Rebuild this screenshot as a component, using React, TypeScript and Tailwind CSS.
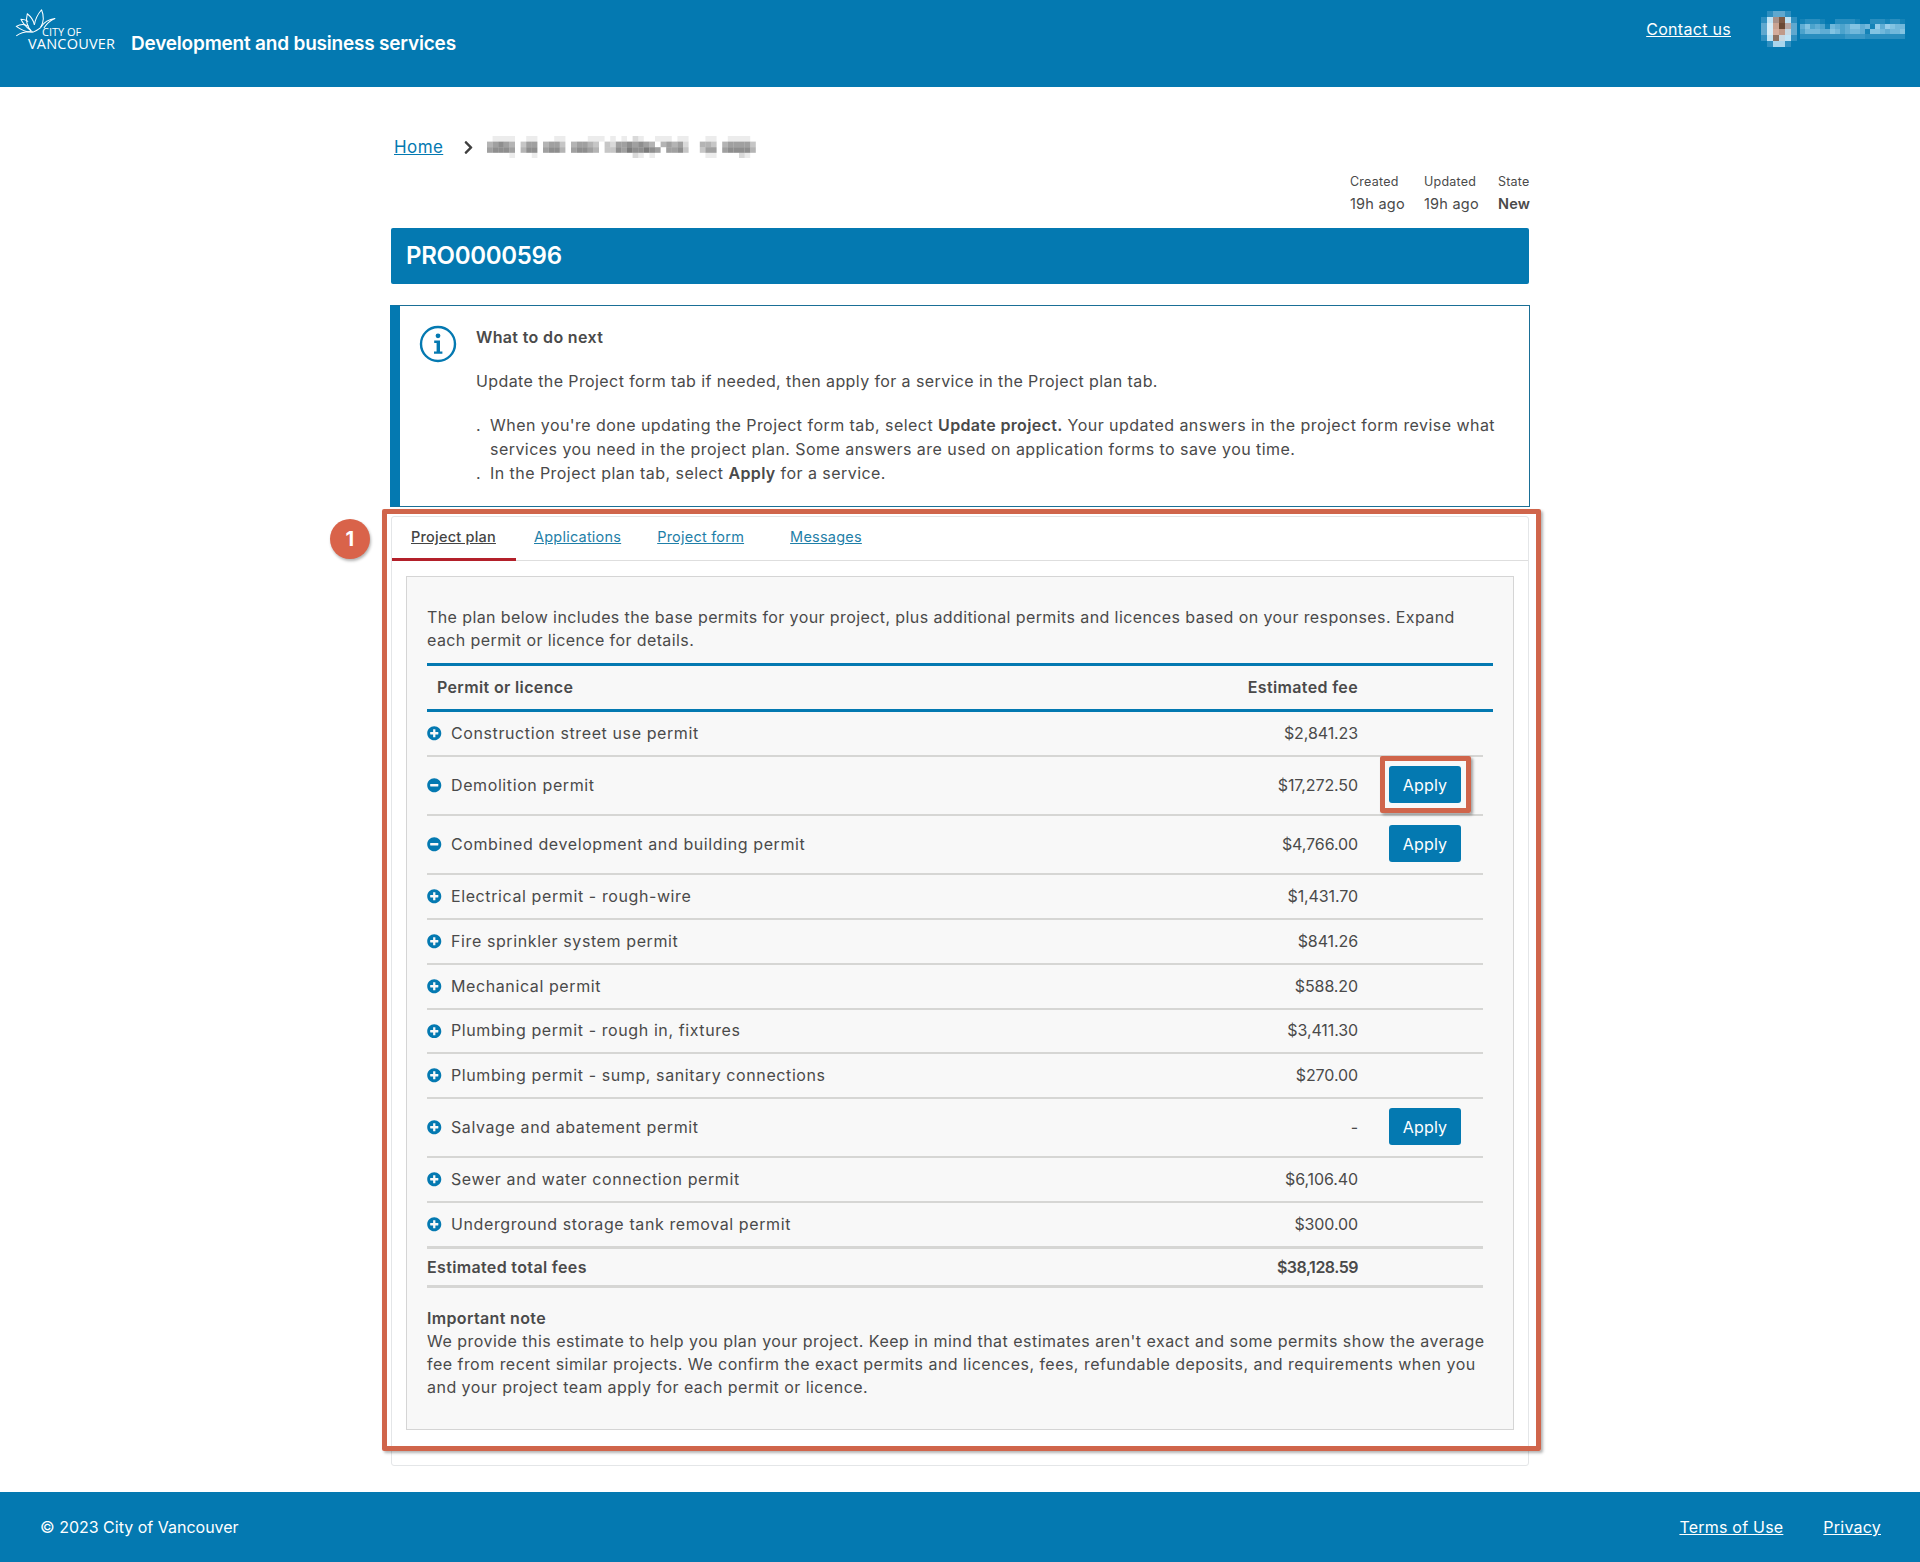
import { FaChevronRight, FaMinusCircle, FaPlusCircle } from 'react-icons/fa';

const crumbCells = [
  '011110011000110000111010102100111011000110011110',
  '456540355045530455430325565654045452004430455553',
  '566650466056640566540336576676505563003550566664',
  '000010001000000000000000002101000000000110000210',
];

const nameCells = [
  '122210022221002221221',
  '574541654577561858766',
  '466655764566517765667',
  '222222222333322222222',
];

const avatarCells = [
  ['#0479b1', '#2f8fc0', '#5fa8cf', '#5fa8cf', '#2f8fc0', '#0479b1'],
  ['#2f8fc0', '#bfe3f5', '#a89088', '#7d5a45', '#bfe3f5', '#2f8fc0'],
  ['#5fa8cf', '#d5ecf8', '#c9a392', '#6b4a35', '#b9a9a6', '#5fa8cf'],
  ['#5fa8cf', '#d5ecf8', '#d4ac9c', '#c09a88', '#c6d8e2', '#5fa8cf'],
  ['#2f8fc0', '#bfe3f5', '#8d7263', '#c6d8e2', '#bfe3f5', '#2f8fc0'],
  ['#0479b1', '#2f8fc0', '#a9d5ec', '#a9d5ec', '#2f8fc0', '#0479b1'],
];

const rows = [
  { name: 'Construction street use permit', fee: '$2,841.23', h: 'h-[45px]' },
  { name: 'Demolition permit', fee: '$17,272.50', h: 'h-[59px]', open: true, apply: true, marked: true },
  { name: 'Combined development and building permit', fee: '$4,766.00', h: 'h-[59px]', open: true, apply: true },
  { name: 'Electrical permit - rough-wire', fee: '$1,431.70', h: 'h-[45px]' },
  { name: 'Fire sprinkler system permit', fee: '$841.26', h: 'h-[45px]' },
  { name: 'Mechanical permit', fee: '$588.20', h: 'h-[45px]' },
  { name: 'Plumbing permit - rough in, fixtures', fee: '$3,411.30', h: 'h-[44px]' },
  { name: 'Plumbing permit - sump, sanitary connections', fee: '$270.00', h: 'h-[45px]' },
  { name: 'Salvage and abatement permit', fee: '-', h: 'h-[59px]', apply: true },
  { name: 'Sewer and water connection permit', fee: '$6,106.40', h: 'h-[45px]' },
  { name: 'Underground storage tank removal permit', fee: '$300.00', h: 'h-[45px]' },
];

// pixelated stand-in for the censored text in the screenshot
function Mosaic({ cells, size, color, className }: { cells: string[]; size: number; color: string; className?: string }) {
  return (
    <svg className={className} width={cells[0].length * size} height={cells.length * size} aria-hidden="true">
      {cells.map((row, y) =>
        row.split('').map((v, x) => (
          <rect key={`${x}-${y}`} x={x * size} y={y * size} width={size} height={size} fill={color} opacity={Number(v) / 9} />
        )),
      )}
    </svg>
  );
}

function Avatar() {
  return (
    <svg width="36" height="36" aria-hidden="true">
      {avatarCells.map((row, y) =>
        row.map((c, x) => <rect key={`${x}-${y}`} x={x * 6} y={y * 6} width="6" height="6" fill={c} />),
      )}
    </svg>
  );
}

function Logo() {
  return (
    <div className="relative w-[104px] h-[50px] shrink-0">
      <svg className="absolute left-0 top-[5px] w-[42px] h-[30px]" viewBox="0 0 52 38" fill="none" stroke="white" strokeWidth="1.3" strokeLinejoin="round">
        <path d="M20 28 C14 22 13 14 15 6 C20 10 23 15 24 20" />
        <path d="M24 20 C25 13 28 7 33 1 C36 8 36 16 32 23" />
        <path d="M32 23 C36 17 41 13 50 12 C45 14 40 18 36 24" />
        <path d="M20 28 C15 24 10 20 7 13 C11 13 14 14 16 16" />
        <path d="M22 29 C15 30 8 27 1 22 C6 19 12 19 17 22" />
        <path d="M1 34 C6 30 14 28 23 29 C27 27 31 25 32 23" />
      </svg>
      <div className="absolute left-[27px] top-[22px] text-[11px] leading-none tracking-normal text-white font-['Open_Sans',sans-serif]">CITY OF</div>
      <div className="absolute left-[13px] top-[33px] text-[14.5px] leading-none tracking-[0.2px] text-white font-['Open_Sans',sans-serif]">VANCOUVER</div>
    </div>
  );
}

function InfoIcon() {
  return (
    <svg className="w-[38px] h-[38px] shrink-0" viewBox="0 0 38 38" fill="none" aria-hidden="true">
      <circle cx="19" cy="19" r="17" stroke="#0479b1" strokeWidth="2.4" />
      <circle cx="19" cy="10.8" r="2.4" fill="#0479b1" />
      <path d="M15.2 15.6h5.8v10.8h2.4v2.4h-8.4v-2.4h2.6v-8.4h-2.4z" fill="#0479b1" />
    </svg>
  );
}

function Row({ name, fee, h, open, apply, marked }: { name: string; fee: string; h: string; open?: boolean; apply?: boolean; marked?: boolean }) {
  return (
    <div className={`flex items-center w-[1056px] pb-[2px] border-b-2 border-[#d6d6d4] tracking-[0.6px] ${h}`}>
      <span className="w-[24px] mt-[2px] shrink-0 text-[#0479b1] text-[14.5px]">{open ? <FaMinusCircle /> : <FaPlusCircle />}</span>
      <span className="flex-1">{name}</span>
      <span className="w-[120px] text-right tracking-[-0.1px]">{fee}</span>
      <span className="w-[125px] pl-[31px]">
        {apply && (
          <span className="relative inline-block align-middle">
            <button className="block w-[72px] h-[37px] rounded-[3px] bg-[#0479b1] text-white text-[16px] tracking-[0.22px]">Apply</button>
            {marked && (
              <span className="absolute -left-[9px] -top-[10px] w-[91px] h-[57px] border-[5px] border-[#d0654b] rounded-[2px] shadow-[2px_2px_3px_rgba(0,0,0,0.35)]" />
            )}
          </span>
        )}
      </span>
    </div>
  );
}

export default function App() {
  return (
    <div className="min-h-[1562px] flex flex-col bg-white text-[#4a4a4a] text-[16px] leading-[24px] font-['Inter',sans-serif] tracking-[0.4px]">
      <header className="h-[87px] bg-[#0479b1] text-white flex items-start pl-[15px] pr-[15px]">
        <div className="pt-[4px]">
          <Logo />
        </div>
        <div className="ml-[12px] mt-[31px] text-[19px] leading-[26px] font-semibold tracking-[-0.2px]">Development and business services</div>
        <a className="ml-auto mt-[17px] underline text-[16px] tracking-[0.3px]" href="#">Contact us</a>
        <div className="ml-[30px] mt-[11px] flex items-center gap-[3px]">
          <Avatar />
          <Mosaic cells={nameCells} size={5} color="#a8d8f0" />
        </div>
      </header>

      <main className="w-[1140px] mx-auto flex-1">
        <nav className="mt-[48px] flex items-center h-[24px]">
          <a className="ml-[4px] underline text-[#0479b1] text-[17px]" href="#">Home</a>
          <FaChevronRight className="ml-[18px] text-[15px] text-[#3f3f3f]" />
          <Mosaic className="ml-[11px]" cells={crumbCells} size={5.6} color="#555555" />
        </nav>

        <div className="mt-[12px] flex justify-end">
          <dl className="flex gap-[20px] tracking-[0.22px] whitespace-nowrap">
            <div className="w-[54px]">
              <dt className="text-[12.5px] leading-[22px]">Created</dt>
              <dd className="text-[14.5px] leading-[21px]">19h ago</dd>
            </div>
            <div className="w-[54px]">
              <dt className="text-[12.5px] leading-[22px]">Updated</dt>
              <dd className="text-[14.5px] leading-[21px]">19h ago</dd>
            </div>
            <div className="w-[32px]">
              <dt className="text-[12.5px] leading-[22px]">State</dt>
              <dd className="text-[14.5px] leading-[21px] font-semibold">New</dd>
            </div>
          </dl>
        </div>

        <h1 className="mt-[14px] ml-[1px] mr-[1px] h-[56px] rounded-[2px] bg-[#0479b1] text-white pl-[15px] flex items-center text-[24px] font-semibold tracking-[-0.3px]">PRO0000596</h1>

        <section className="mt-[21px] h-[202px] border border-[#1a6f96] border-l-[10px] border-l-[#0479b1] flex pt-[19px] pl-[19px]">
          <InfoIcon />
          <div className="ml-[19px] w-[1040px]">
            <h2 className="font-semibold text-[16px] tracking-[0.35px]">What to do next</h2>
            <p className="mt-[20px]">Update the Project form tab if needed, then apply for a service in the Project plan tab.</p>
            <ul className="mt-[20px] tracking-[0.45px]">
              <li className="flex">
                <span className="w-[14px] shrink-0">.</span>
                <span>When you're done updating the Project form tab, select <b className="font-semibold tracking-[0.35px]">Update project.</b> Your updated answers in the project form revise what services you need in the project plan. Some answers are used on application forms to save you time.</span>
              </li>
              <li className="flex">
                <span className="w-[14px] shrink-0">.</span>
                <span>In the Project plan tab, select <b className="font-semibold tracking-[0.35px]">Apply</b> for a service.</span>
              </li>
            </ul>
          </div>
        </section>

        <section className="relative mt-[9px] h-[950px] ml-[1px] mr-[1px] border border-[#e4e6e8] rounded-[3px]">
          <div className="flex h-[44px] border-b border-[#dedede] text-[14.5px] tracking-[0.22px]">
            <a className="w-[124px] h-[44px] pl-[19px] pt-[8px] underline text-[#444] font-medium border-b-[3px] border-[#b3202a]" href="#">Project plan</a>
            <a className="ml-[18px] pt-[8px] underline text-[#1f7fa8]" href="#">Applications</a>
            <a className="ml-[36px] pt-[8px] underline text-[#1f7fa8]" href="#">Project form</a>
            <a className="ml-[46px] pt-[8px] underline text-[#1f7fa8]" href="#">Messages</a>
          </div>

          <div className="mx-[14px] mt-[15px] h-[854px] border border-[#d5d5d5] bg-[#f8f8f8] px-[20px] pt-[29px]">
            <p className="leading-[23px]">The plan below includes the base permits for your project, plus additional permits and licences based on your responses. Expand each permit or licence for details.</p>

            <div className="mt-[11px] h-[49px] pb-[2px] border-y-[3px] border-[#0479b1] flex items-center font-semibold tracking-[0.35px]">
              <span className="flex-1 pl-[10px]">Permit or licence</span>
              <span className="pr-[135px] whitespace-nowrap">Estimated fee</span>
            </div>

            {rows.map((row) => (
              <Row key={row.name} {...row} />
            ))}

            <div className="flex items-center w-[1056px] h-[42px] border-y-[3px] -mt-[2px] border-[#d6d6d4] font-semibold tracking-[0.35px]">
              <span className="flex-1">Estimated total fees</span>
              <span className="pr-[125px] tracking-[-0.5px]">$38,128.59</span>
            </div>

            <h3 className="mt-[19px] leading-[23px] font-semibold tracking-[0.35px]">Important note</h3>
            <p className="leading-[23px] tracking-[0.47px]">We provide this estimate to help you plan your project. Keep in mind that estimates aren't exact and some permits show the average fee from recent similar projects. We confirm the exact permits and licences, fees, refundable deposits, and requirements when you and your project team apply for each permit or licence.</p>
          </div>

          {/* annotation overlay */}
          <div className="absolute -left-[10px] -top-[8px] w-[1159px] h-[942px] border-[5px] border-[#d0654b] rounded-[2px] shadow-[2px_2px_3px_rgba(0,0,0,0.3)] pointer-events-none" />
          <div className="absolute -left-[62px] top-[2px] w-[40px] h-[40px] rounded-full bg-[#d9634a] text-white font-bold text-[20px] flex items-center justify-center shadow-[1px_2px_3px_rgba(0,0,0,0.3)]">1</div>
        </section>
      </main>

      <footer className="mt-[26px] h-[70px] bg-[#0479b1] text-white flex items-center pl-[40px] pr-[39px] tracking-[0.22px]">
        <span className="tracking-normal">© 2023 City of Vancouver</span>
        <a className="ml-auto underline" href="#">Terms of Use</a>
        <a className="ml-[40px] underline" href="#">Privacy</a>
      </footer>
    </div>
  );
}
